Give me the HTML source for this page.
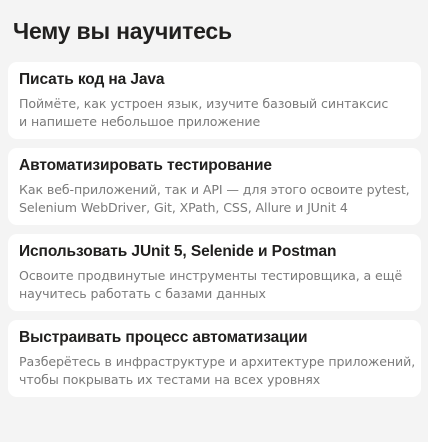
<!DOCTYPE html>
<html><head><meta charset="utf-8"><style>
body{margin:0;background:#f4f4f4;width:428px;height:442px;font-family:"Liberation Sans","Noto Sans CJK SC",sans-serif;overflow:hidden}
h1{position:absolute;left:13px;top:17px;margin:0;font-size:23px;line-height:28px;font-weight:bold;color:#21201f;letter-spacing:-0.2px}
.c{position:absolute;left:8px;width:413px;height:77px;background:#fff;border-radius:9px;box-sizing:border-box;padding:8px 11px}
.t{font-size:15.5px;font-weight:bold;color:#21201f;line-height:20px;letter-spacing:-0.1px}
.d{font-family:"DejaVu Sans",sans-serif;font-size:12.6px;color:#7a7a7a;line-height:18px;margin-top:5px;letter-spacing:-0.1px;white-space:nowrap}
</style></head><body>
<h1>Чему вы научитесь</h1>
<div class="c" style="top:62px"><div class="t">Писать код на Java</div><div class="d">Поймёте, как устроен язык, изучите базовый синтаксис<br>и напишете небольшое приложение</div></div>
<div class="c" style="top:148px"><div class="t">Автоматизировать тестирование</div><div class="d">Как веб-приложений, так и API — для этого освоите pytest,<br>Selenium WebDriver, Git, XPath, CSS, Allure и JUnit 4</div></div>
<div class="c" style="top:234px"><div class="t">Использовать JUnit 5, Selenide и Postman</div><div class="d">Освоите продвинутые инструменты тестировщика, а ещё<br>научитесь работать с базами данных</div></div>
<div class="c" style="top:320px"><div class="t">Выстраивать процесс автоматизации</div><div class="d">Разберётесь в инфраструктуре и архитектуре приложений,<br>чтобы покрывать их тестами на всех уровнях</div></div>
</body></html>
